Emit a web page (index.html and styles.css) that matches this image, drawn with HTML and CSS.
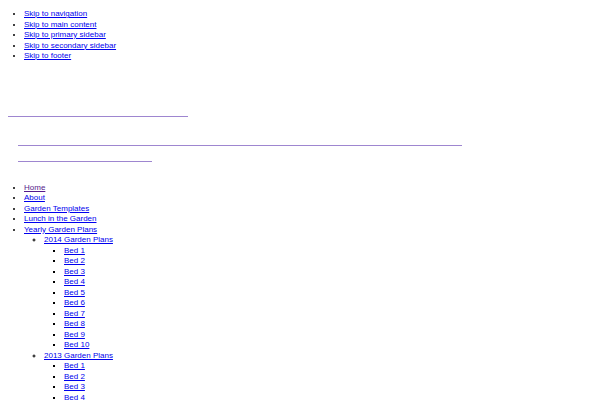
FILE: index.html
```
<!DOCTYPE html>
<html lang="en">
<head>
<meta charset="utf-8">
<title>Garden Plans</title>
<link rel="stylesheet" href="styles.css">
</head>
<body>
<ul class="skip">
  <li><a href="#nav">Skip to navigation</a></li>
  <li><a href="#main">Skip to main content</a></li>
  <li><a href="#primary">Skip to primary sidebar</a></li>
  <li><a href="#secondary">Skip to secondary sidebar</a></li>
  <li><a href="#footer">Skip to footer</a></li>
</ul>
<header class="site-header">
  <a class="title-link" href="#" aria-label="Site title"></a>
  <a class="desc-link desc-1" href="#" aria-label="Site description"></a>
  <a class="desc-link desc-2" href="#" aria-label="Site description continued"></a>
</header>
<nav id="nav">
  <ul class="menu">
    <li><a class="visited" href="#">Home</a></li>
    <li><a href="#">About</a></li>
    <li><a href="#">Garden Templates</a></li>
    <li><a href="#">Lunch in the Garden</a></li>
    <li><a href="#">Yearly Garden Plans</a>
      <ul class="sub">
        <li><a href="#">2014 Garden Plans</a>
          <ul class="sub sub2">
            <li><a href="#">Bed 1</a></li>
            <li><a href="#">Bed 2</a></li>
            <li><a href="#">Bed 3</a></li>
            <li><a href="#">Bed 4</a></li>
            <li><a href="#">Bed 5</a></li>
            <li><a href="#">Bed 6</a></li>
            <li><a href="#">Bed 7</a></li>
            <li><a href="#">Bed 8</a></li>
            <li><a href="#">Bed 9</a></li>
            <li><a href="#">Bed 10</a></li>
          </ul>
        </li>
        <li><a href="#">2013 Garden Plans</a>
          <ul class="sub sub2">
            <li><a href="#">Bed 1</a></li>
            <li><a href="#">Bed 2</a></li>
            <li><a href="#">Bed 3</a></li>
            <li><a href="#">Bed 4</a></li>
          </ul>
        </li>
      </ul>
    </li>
  </ul>
</nav>
</body>
</html>
```
FILE: styles.css
```
html, body {
  margin: 0;
  padding: 0;
  background: #ffffff;
}
body {
  font-family: "Liberation Sans", Arial, sans-serif;
  font-size: 8px;
  line-height: 10.5px;
  color: #000000;
}
a {
  color: #0000ee;
  text-decoration: underline;
}
a.visited {
  color: #551a8b;
}
ul {
  list-style: disc;
}
.skip {
  margin: 9px 0 0 0;
  padding-left: 24px;
}
.site-header {
  display: flex;
  flex-direction: column;
  align-items: flex-start;
}
.title-link,
.desc-link {
  display: block;
  height: 1px;
  background: #9e86d0;
}
.title-link {
  width: 180px;
  margin: 54.5px 0 0 8px;
}
.desc-1 {
  width: 444px;
  margin: 28px 0 0 18px;
}
.desc-2 {
  width: 134px;
  margin: 15px 0 0 18px;
}
.menu {
  margin: 20.75px 0 0 0;
  padding-left: 24px;
}
.sub {
  margin: 0;
  padding-left: 20px;
  list-style: circle;
}
.sub2 {
  list-style: square;
}
```
